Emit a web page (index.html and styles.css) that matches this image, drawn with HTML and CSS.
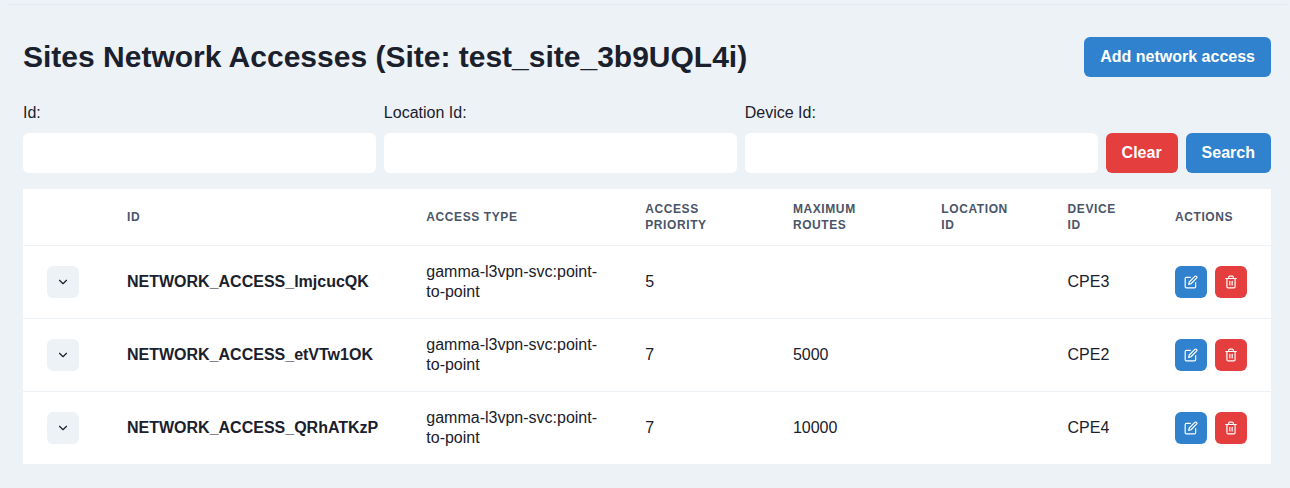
FILE: index.html
```html
<!DOCTYPE html>
<html lang="en">
<head>
<meta charset="utf-8">
<title>Sites Network Accesses</title>
<link rel="stylesheet" href="styles.css">
</head>
<body>
<svg class="sprite" aria-hidden="true">
  <symbol id="chevron" viewBox="0 0 24 24"><polyline points="6 9 12 15 18 9"/></symbol>
  <symbol id="edit" viewBox="0 0 24 24"><path d="M11 4H4a2 2 0 0 0-2 2v14a2 2 0 0 0 2 2h14a2 2 0 0 0 2-2v-7"/><path d="M18.5 2.5a2.121 2.121 0 0 1 3 3L12 15l-4 1 1-4 9.500-9.500z"/></symbol>
  <symbol id="trash" viewBox="0 0 24 24"><polyline points="3 6 5 6 21 6"/><path d="M19 6v14a2 2 0 0 1-2 2H7a2 2 0 0 1-2-2V6m3 0V4a2 2 0 0 1 2-2h4a2 2 0 0 1 2 2v2"/><line x1="10" y1="11" x2="10" y2="17"/><line x1="14" y1="11" x2="14" y2="17"/></symbol>
</svg>
<hr class="divider">
<main class="container">
  <header class="page-header">
    <h2 class="title">Sites Network Accesses (Site: test_site_3b9UQL4i)</h2>
    <button class="btn btn-blue">Add network access</button>
  </header>
  <form class="filters">
    <label class="field"><span class="field-label">Id:</span><input class="input" type="text"></label>
    <label class="field"><span class="field-label">Location Id:</span><input class="input" type="text"></label>
    <label class="field"><span class="field-label">Device Id:</span><input class="input" type="text"></label>
    <button class="btn btn-red" type="button">Clear</button>
    <button class="btn btn-blue" type="button">Search</button>
  </form>
  <table class="table">
    <colgroup><col class="c-toggle"><col class="c-id"><col class="c-type"><col class="c-priority"><col class="c-routes"><col class="c-location"><col class="c-device"><col class="c-actions"></colgroup>
    <thead>
      <tr><th></th><th>Id</th><th>Access type</th><th>Access priority</th><th>Maximum routes</th><th>Location Id</th><th>Device Id</th><th>Actions</th></tr>
    </thead>
    <tbody>
      <tr>
        <td><button class="icon-btn btn-gray" aria-label="Expand"><svg class="icon"><use href="#chevron"/></svg></button></td>
        <td class="name">NETWORK_ACCESS_lmjcucQK</td><td>gamma-l3vpn-svc:point-to-point</td><td>5</td><td></td><td></td><td>CPE3</td>
        <td><div class="actions"><button class="icon-btn btn-blue" aria-label="Edit"><svg class="icon"><use href="#edit"/></svg></button><button class="icon-btn btn-red" aria-label="Delete"><svg class="icon"><use href="#trash"/></svg></button></div></td>
      </tr>
      <tr>
        <td><button class="icon-btn btn-gray" aria-label="Expand"><svg class="icon"><use href="#chevron"/></svg></button></td>
        <td class="name">NETWORK_ACCESS_etVTw1OK</td><td>gamma-l3vpn-svc:point-to-point</td><td>7</td><td>5000</td><td></td><td>CPE2</td>
        <td><div class="actions"><button class="icon-btn btn-blue" aria-label="Edit"><svg class="icon"><use href="#edit"/></svg></button><button class="icon-btn btn-red" aria-label="Delete"><svg class="icon"><use href="#trash"/></svg></button></div></td>
      </tr>
      <tr>
        <td><button class="icon-btn btn-gray" aria-label="Expand"><svg class="icon"><use href="#chevron"/></svg></button></td>
        <td class="name">NETWORK_ACCESS_QRhATKzP</td><td>gamma-l3vpn-svc:point-to-point</td><td>7</td><td>10000</td><td></td><td>CPE4</td>
        <td><div class="actions"><button class="icon-btn btn-blue" aria-label="Edit"><svg class="icon"><use href="#edit"/></svg></button><button class="icon-btn btn-red" aria-label="Delete"><svg class="icon"><use href="#trash"/></svg></button></div></td>
      </tr>
    </tbody>
  </table>
</main>
</body>
</html>
```
FILE: styles.css
```css
* { box-sizing: border-box; }

body {
  margin: 0;
  padding-top: 4px;
  background: #edf2f7;
  color: #1a202c;
  font: 16px/24px "Liberation Sans", Arial, sans-serif;
}

button, input { font: inherit; border: 0; }

.sprite { display: none; }

.divider {
  height: 1px;
  margin: 0 3px 0 7px;
  border: 0;
  background: #e2e8f0;
}

.container { padding: 32px 19px 24px 23px; }

.page-header {
  display: flex;
  align-items: center;
  justify-content: space-between;
  margin-bottom: 24px;
}

.title {
  margin: 0;
  font-size: 30px;
  line-height: 40px;
  font-weight: 700;
}

.btn {
  flex: none;
  height: 40px;
  padding: 0 16px;
  border-radius: 6px;
  font-weight: 700;
  line-height: 20px;
}

.btn-blue { background: #3182ce; color: #fff; }
.btn-red { background: #e53e3e; color: #fff; }
.btn-gray { background: #edf2f7; color: #1a202c; }

.filters {
  display: flex;
  align-items: flex-end;
  gap: 8px;
  margin-bottom: 16px;
}

.field { flex: 1; min-width: 0; }

.field-label {
  display: block;
  margin-bottom: 8px;
}

.input {
  display: block;
  width: 100%;
  height: 40px;
  padding: 0 16px;
  border-radius: 6px;
  background: #fff;
}

.table {
  width: 100%;
  table-layout: fixed;
  border-collapse: separate;
  border-spacing: 0;
  background: #fff;
}

.c-toggle { width: 80px; }
.c-id { width: 299.3px; }
.c-type { width: 218.9px; }
.c-priority { width: 147.7px; }
.c-routes { width: 148.4px; }
.c-location { width: 126.3px; }
.c-device { width: 107.4px; }
.c-actions { width: 120px; }

th {
  padding: 12px 24px;
  border-bottom: 1px solid #edf2f7;
  color: #4a5568;
  font-size: 12px;
  line-height: 16px;
  letter-spacing: 0.6px;
  text-align: left;
  text-transform: uppercase;
}

td {
  padding: 16px 24px;
  border-bottom: 1px solid #edf2f7;
  line-height: 20px;
}

tbody tr:last-child td { border-bottom: 0; }

.name { font-weight: 700; }

.actions { display: flex; gap: 8px; }

.icon-btn {
  display: flex;
  align-items: center;
  justify-content: center;
  width: 32px;
  height: 32px;
  padding: 0;
  border-radius: 6px;
}

.icon {
  width: 14px;
  height: 14px;
  fill: none;
  stroke: currentColor;
  stroke-width: 2;
  stroke-linecap: round;
  stroke-linejoin: round;
}
```
